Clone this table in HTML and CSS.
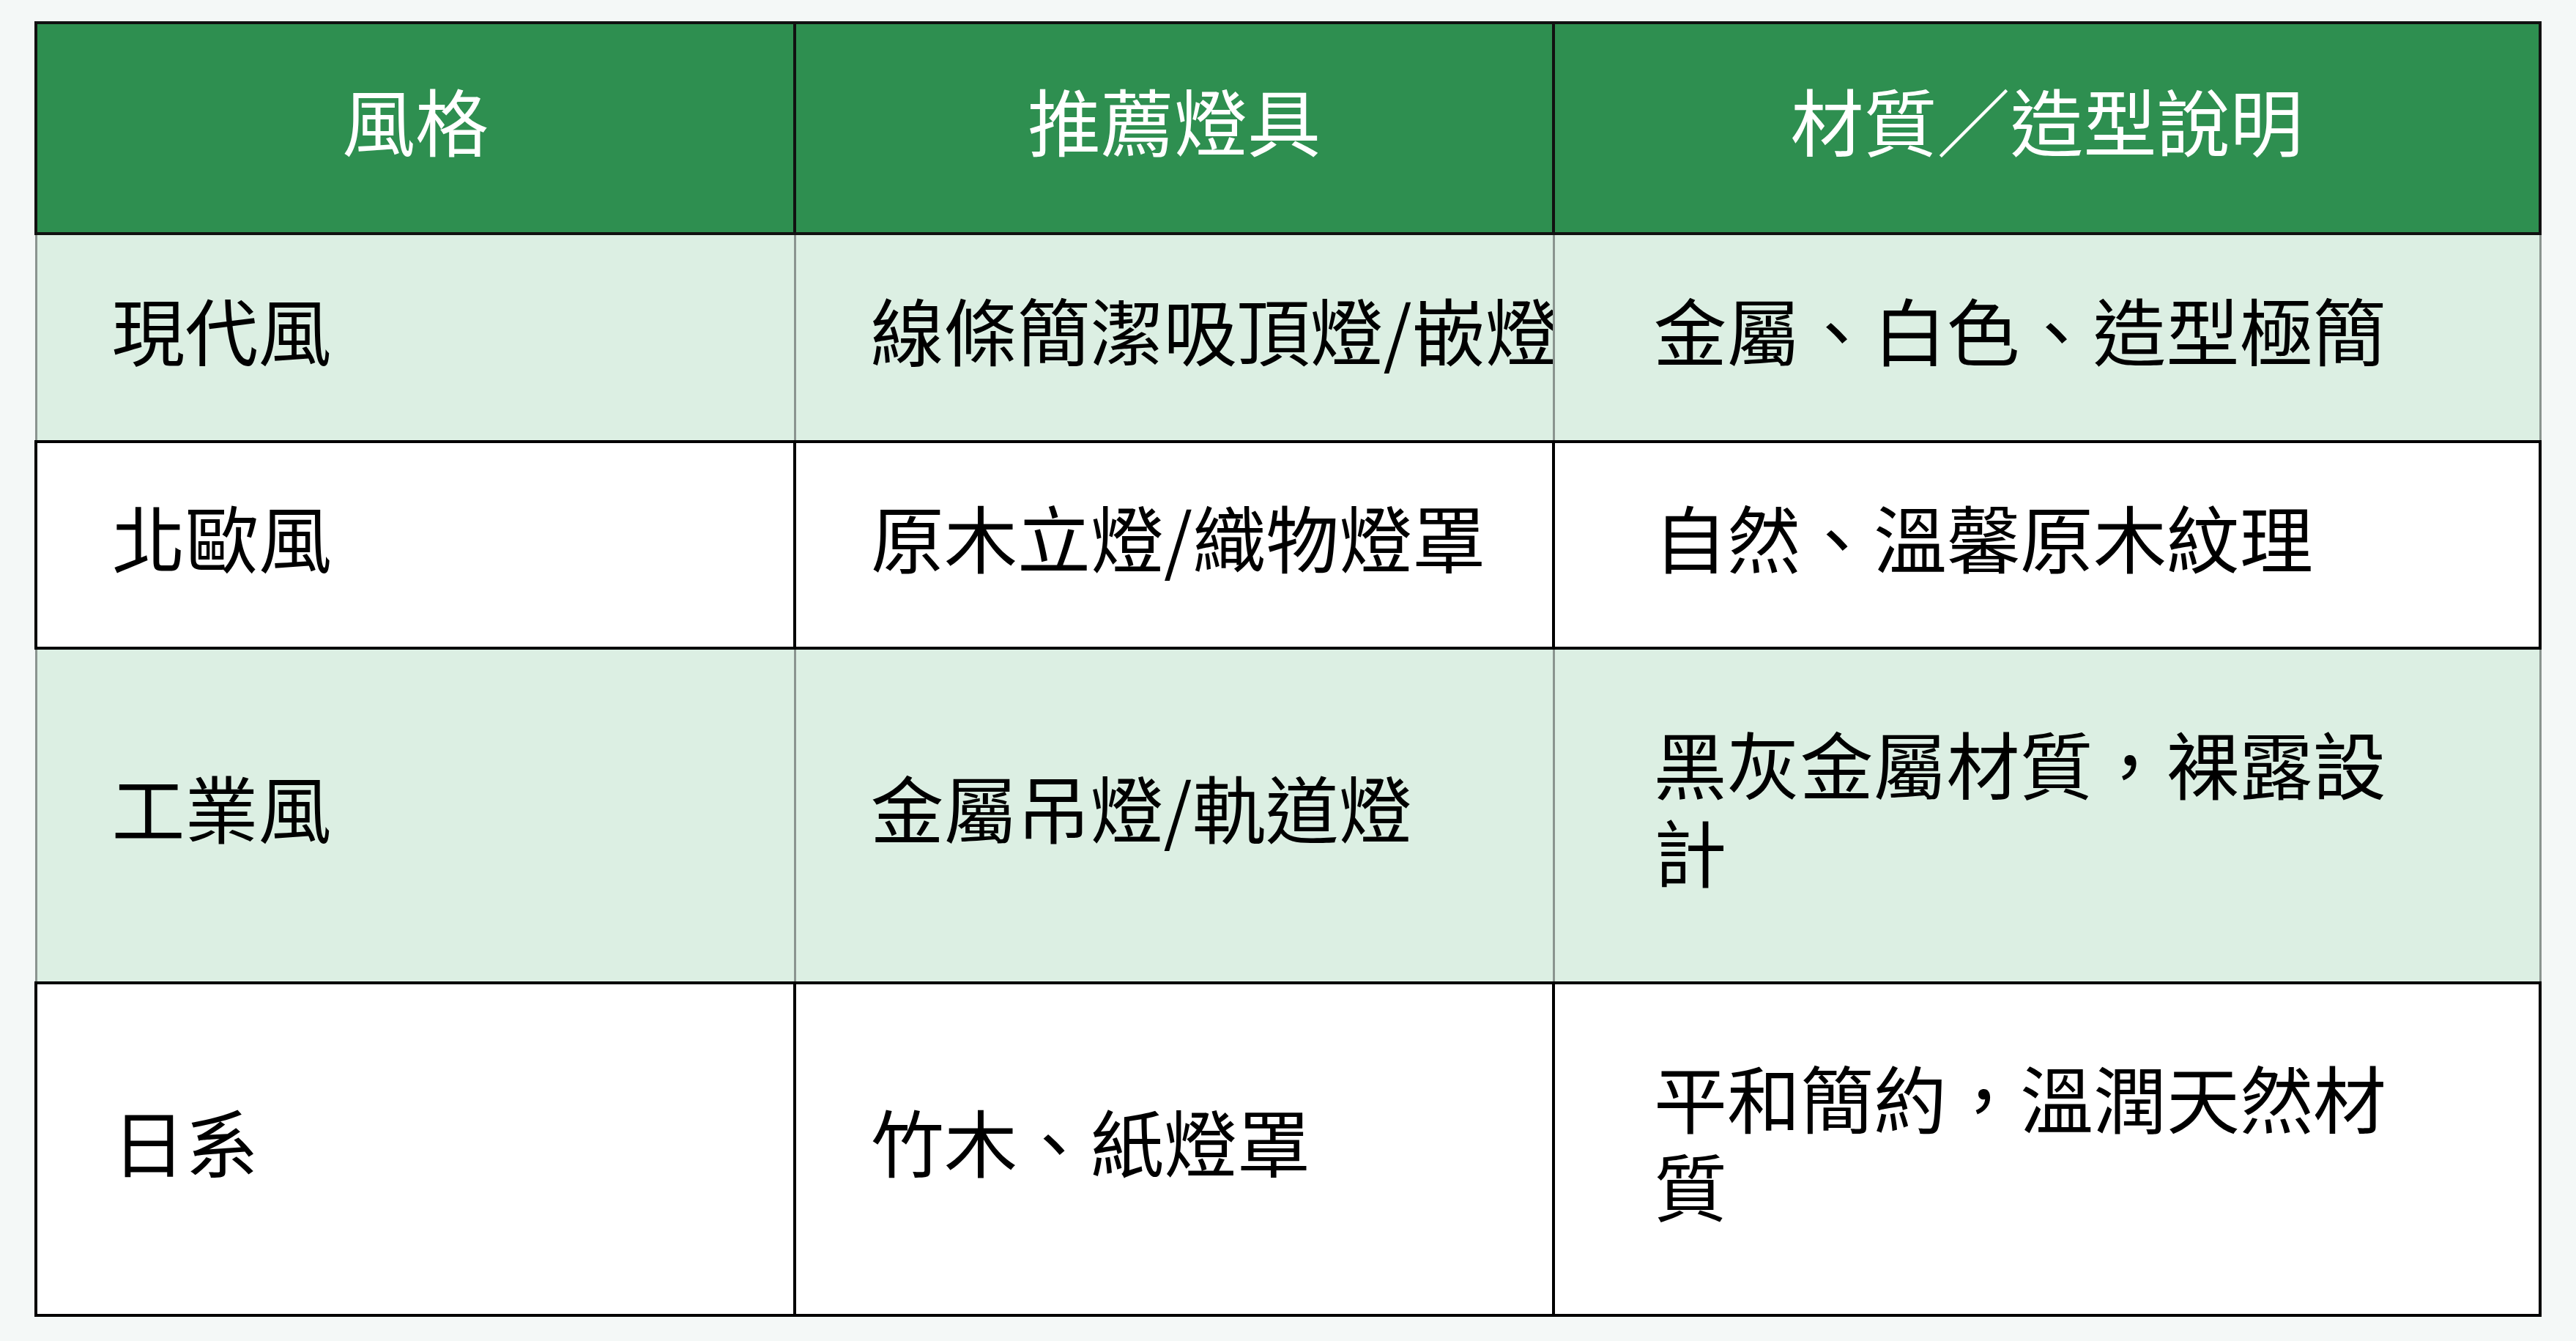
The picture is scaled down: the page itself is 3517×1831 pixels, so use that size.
FILE: index.html
```
<!DOCTYPE html>
<html lang="zh-Hant">
<head>
<meta charset="utf-8">
<title>燈具風格對照表</title>
<link rel="stylesheet" href="styles.css">
</head>
<body>
<main class="page">
  <table class="style-table">
    <colgroup>
      <col class="col-style">
      <col class="col-lamp">
      <col class="col-desc">
    </colgroup>
    <thead>
      <tr>
        <th>風格</th>
        <th>推薦燈具</th>
        <th>材質／造型說明</th>
      </tr>
    </thead>
    <tbody>
      <tr class="row-shaded">
        <td class="cell-style">現代風</td>
        <td class="cell-lamp">線條簡潔吸頂燈/嵌燈</td>
        <td class="cell-desc">金屬、白色、造型極簡</td>
      </tr>
      <tr class="row-plain">
        <td class="cell-style">北歐風</td>
        <td class="cell-lamp">原木立燈/織物燈罩</td>
        <td class="cell-desc">自然、溫馨原木紋理</td>
      </tr>
      <tr class="row-shaded row-tall">
        <td class="cell-style">工業風</td>
        <td class="cell-lamp">金屬吊燈/軌道燈</td>
        <td class="cell-desc">黑灰金屬材質，裸露設計</td>
      </tr>
      <tr class="row-plain row-tall">
        <td class="cell-style">日系</td>
        <td class="cell-lamp">竹木、紙燈罩</td>
        <td class="cell-desc">平和簡約，溫潤天然材質</td>
      </tr>
    </tbody>
  </table>
</main>
</body>
</html>
```
FILE: styles.css
```
html, body {
  margin: 0;
  padding: 0;
  background: #f4f8f7;
}

.page {
  padding: 29px 47px 31px 47px;
  font-family: "Noto Sans CJK TC", "Noto Sans CJK SC", "Noto Sans", sans-serif;
  font-size: 100px;
  line-height: 120px;
  color: #000;
}

.style-table {
  width: 100%;
  border-collapse: collapse;
  table-layout: fixed;
}

.col-style { width: 1036px; }
.col-lamp { width: 1036px; }
.col-desc { width: auto; }

.style-table th {
  background: #2e8f50;
  color: #ffffff;
  font-weight: 400;
  text-align: center;
  padding: 70px 40px 94px 40px;
  border: 4px solid #111;
}

.style-table td {
  text-align: left;
  vertical-align: middle;
  font-weight: 400;
  padding-left: 102px;
  padding-right: 100px;
}

.row-shaded td {
  background: #dcefe3;
  border: 3px solid #8a948f;
  padding-top: 68px;
  padding-bottom: 92px;
}

.row-plain td {
  background: #ffffff;
  border: 4px solid #000;
  padding-top: 67px;
  padding-bottom: 91px;
}

.row-shaded.row-tall td {
  padding-top: 94px;
  padding-bottom: 119px;
}

.row-plain.row-tall td {
  padding-top: 93px;
  padding-bottom: 117px;
}

.cell-lamp {
  white-space: nowrap;
  overflow: hidden;
}

.style-table td.cell-desc {
  padding-left: 135px;
  padding-right: 130px;
}
```
